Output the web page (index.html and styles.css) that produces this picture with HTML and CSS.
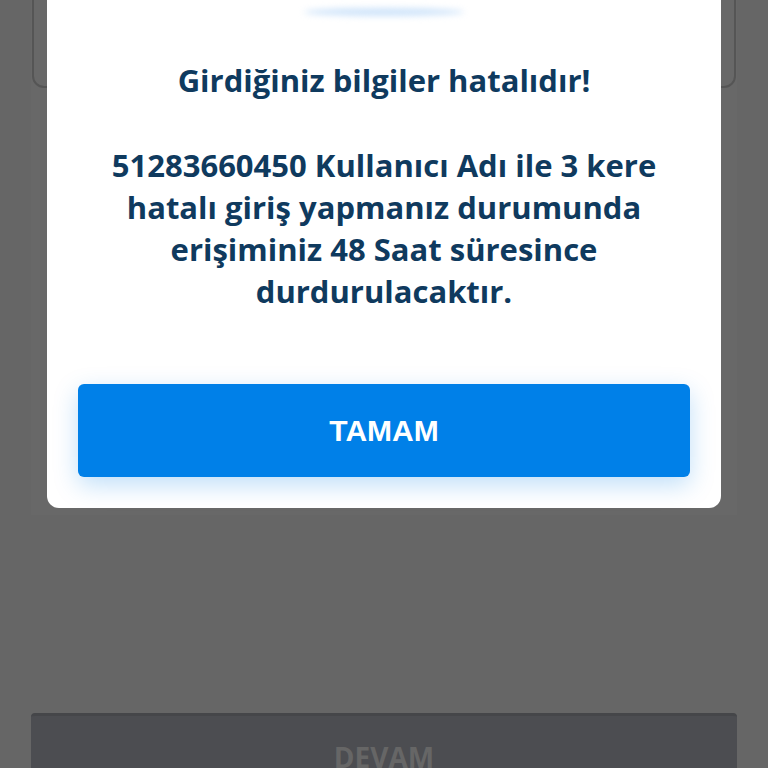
FILE: index.html
```html
<!DOCTYPE html>
<html lang="tr">
<head>
    <meta charset="UTF-8">
    <meta name="viewport" content="width=device-width, initial-scale=1.0">
    <title>Giriş</title>
    <link rel="stylesheet" href="styles.css">
</head>
<body>

<div class="page">
    <div class="login-panel">
        <div class="input-card"></div>
    </div>
    <div class="footer">
        <button class="btn-continue" disabled>DEVAM</button>
    </div>
</div>

<!-- Uyarı penceresi -->
<div class="overlay">
    <div class="dialog">
        <div class="dialog-icon"></div>
        <h2 class="dialog-title">Girdiğiniz bilgiler hatalıdır!</h2>
        <p class="dialog-text">51283660450 Kullanıcı Adı ile 3 kere hatalı giriş yapmanız durumunda erişiminiz 48 Saat süresince durdurulacaktır.</p>
        <button class="btn-ok">TAMAM</button>
    </div>
</div>

</body>
</html>
```

FILE: styles.css
```css
body {
    margin: 0;
    padding: 0;
    background-color: #666666;
    font-family: "Open Sans", Arial, sans-serif;
    height: 768px;
    overflow: hidden;
}
.page {
    height: 768px;
    display: flex;
    flex-direction: column;
    justify-content: space-between;
    padding: 0 31px;
}
.login-panel {
    height: 515px;
    background-color: #686868;
    padding: 0 1px;
}
.input-card {
    height: 104px;
    margin-top: -20px;
    border: 2px solid #555555;
    border-radius: 0 0 12px 12px;
}
.footer {
    height: 55px;
}
.btn-continue {
    width: 100%;
    height: 100%;
    border: none;
    border-top: 3px solid #454649;
    border-radius: 4px 4px 0 0;
    background-color: #4c4d51;
    color: #666666;
    font-family: "Open Sans", Arial, sans-serif;
    font-weight: 700;
    font-size: 28px;
    padding: 22px 0 0;
}
.overlay {
    position: fixed;
    top: 0;
    left: 0;
    width: 100%;
    height: 100%;
    display: flex;
    justify-content: center;
    align-items: flex-start;
}
.dialog {
    width: 674px;
    margin-top: -40px;
    background-color: white;
    border-radius: 0 0 12px 12px;
    padding: 40px 31px 31px;
    box-sizing: border-box;
    text-align: center;
}
.dialog-icon {
    width: 160px;
    height: 8px;
    margin: 8px auto 0;
    border-radius: 50%;
    background-color: #cfe4fa;
    filter: blur(3px);
}
.dialog-title {
    margin: 44px 0 0;
    font-size: 31px;
    line-height: 40px;
    font-weight: 700;
    color: #0f3a5e;
}
.dialog-text {
    margin: 44px 10px 0;
    font-size: 31px;
    line-height: 42px;
    font-weight: 700;
    color: #0f3a5e;
}
.btn-ok {
    width: 100%;
    height: 93px;
    margin-top: 72px;
    border: none;
    border-radius: 6px;
    background-color: #0080e8;
    color: white;
    font-family: "Liberation Sans", Arial, sans-serif;
    font-weight: 700;
    font-size: 30px;
    box-shadow: 0 8px 24px rgba(0, 128, 232, 0.25);
}
```
